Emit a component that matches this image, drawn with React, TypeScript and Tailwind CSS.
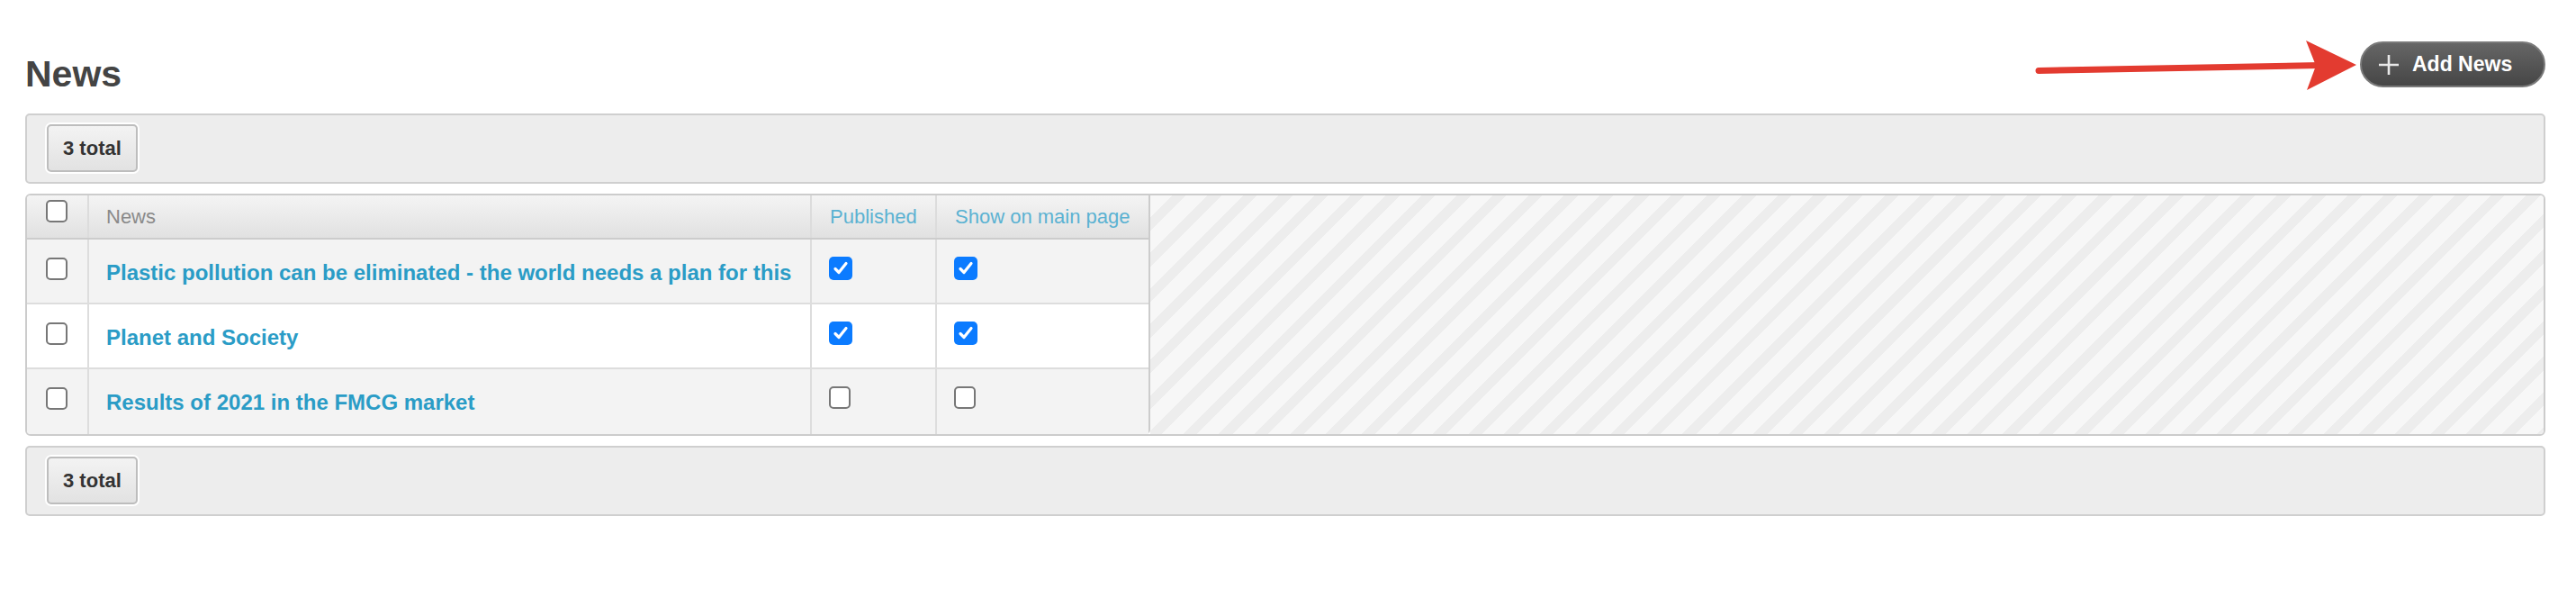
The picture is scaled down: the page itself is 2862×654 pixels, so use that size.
import React from 'react';

type NewsItem = {
  id: number;
  title: string;
  published: boolean;
  onMain: boolean;
};

const news: NewsItem[] = [
  { id: 1, title: 'Plastic pollution can be eliminated - the world needs a plan for this', published: true, onMain: true },
  { id: 2, title: 'Planet and Society', published: true, onMain: true },
  { id: 3, title: 'Results of 2021 in the FMCG market', published: false, onMain: false },
];

const Check: React.FC<{ checked?: boolean }> = ({ checked }) =>
  checked ? (
    <span className="flex h-[26px] w-[26px] items-center justify-center rounded-[5px] bg-[#0b7bff]">
      <svg width="18" height="18" viewBox="0 0 18 18">
        <path d="M3 9.5 L7 13.5 L15 3.5" fill="none" stroke="#fff" strokeWidth="3.2" strokeLinecap="round" strokeLinejoin="round" />
      </svg>
    </span>
  ) : (
    <span className="block h-[25px] w-[24px] rounded-[5px] border-2 border-[#777] bg-white" />
  );

const TotalBar: React.FC<{ count: number }> = ({ count }) => (
  <div className="rounded-[5px] border-2 border-[#cfcfcf] bg-[#ededed] pl-[22px] pt-[10px] pb-[11px]">
    <div className="inline-flex h-[53px] items-center rounded-[5px] border-2 border-[#bdbdbd] bg-gradient-to-b from-[#f3f3f3] to-[#e2e2e2] px-[16px] text-[22px] font-bold text-[#333] shadow-[0_0_0_2px_#fff]">
      {count} total
    </div>
  </div>
);

export default function App() {
  return (
    <div className="relative min-h-[654px] bg-white pt-[46px] pl-[28px] pr-[34px] font-['Liberation_Sans',Arial,sans-serif]">
      {/* header */}
      <div className="flex items-start justify-between">
        <h1 className="mt-[13px] text-[41px] font-bold leading-[46px] text-[#444]">News</h1>
        <button className="flex h-[51px] w-[206px] items-center gap-[14px] rounded-full border-2 border-[#7a7a7a] bg-gradient-to-b from-[#666] to-[#464646] pl-[18px] text-[23px] font-bold text-white">
          <svg width="24" height="24" viewBox="0 0 24 24">
            <path d="M12 1 V23 M1 12 H23" stroke="#e8e8e8" strokeWidth="2.6" />
          </svg>
          Add News
        </button>
      </div>

      {/* annotation arrow */}
      <svg className="absolute left-[2255px] top-[40px]" width="370" height="66" viewBox="2255 40 370 66">
        <path d="M2265 78.5 L2578 72.5" stroke="#e33b30" strokeWidth="7" strokeLinecap="round" />
        <path d="M2562 45 L2618 72 L2563 100 L2573 73 Z" fill="#e33b30" />
      </svg>

      <div className="mt-[21px]">
        <TotalBar count={news.length} />
      </div>

      {/* table */}
      <div className="mt-[11px] flex overflow-hidden rounded-[6px] border-2 border-[#cccccc]">
        <div className="w-[1248px] rounded-br-[5px] border-r-2 border-[#cccccc]">
          <div className="flex h-[49px] border-b-2 border-[#cccccc] bg-gradient-to-b from-[#f4f4f4] to-[#e1e1e1] text-[22px]">
            <div className="w-[69px] border-r-2 border-[#dcdcdc] pl-[21px] pt-[5px]">
              <Check />
            </div>
            <div className="flex w-[803px] items-center border-r-2 border-[#dcdcdc] pl-[19px] text-[#8a8a8a]">News</div>
            <div className="flex w-[139px] items-center border-r-2 border-[#dcdcdc] pl-[20px] text-[#5bb2d2]">Published</div>
            <div className="flex flex-1 items-center pl-[20px] text-[#5bb2d2]">Show on main page</div>
          </div>
          {news.map((item, index) => (
            <div
              key={item.id}
              className={`flex h-[72px] ${index < news.length - 1 ? 'border-b-2 border-[#dddddd]' : ''} ${index % 2 === 0 ? 'bg-[#f3f3f3]' : 'bg-white'}`}
            >
              <div className="w-[69px] border-r-2 border-[#dddddd] pl-[21px] pt-[20px]">
                <Check />
              </div>
              <div className="w-[803px] border-r-2 border-[#dddddd] pl-[19px] pt-[24px]">
                <a className="text-[24px] font-bold leading-[25px] text-[#2a9cc6]">{item.title}</a>
              </div>
              <div className="w-[139px] border-r-2 border-[#dddddd] pl-[19px] pt-[19px]">
                <Check checked={item.published} />
              </div>
              <div className="flex-1 pl-[19px] pt-[19px]">
                <Check checked={item.onMain} />
              </div>
            </div>
          ))}
        </div>
        <div className="flex-1 bg-[repeating-linear-gradient(135deg,#f7f7f7_0px,#f7f7f7_17px,#ededed_17px,#ededed_28px)]" />
      </div>

      <div className="mt-[11px]">
        <TotalBar count={news.length} />
      </div>
    </div>
  );
}
